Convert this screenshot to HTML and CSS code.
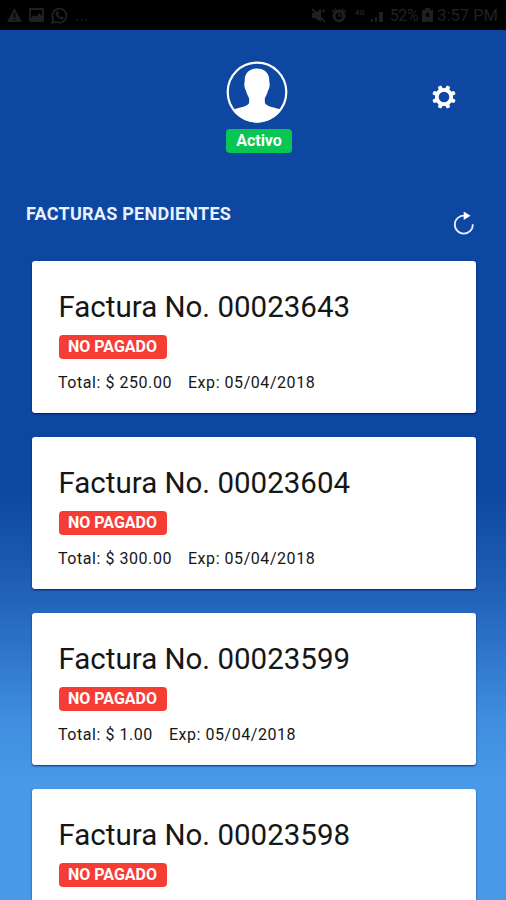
FILE: index.html
```
<!DOCTYPE html>
<html lang="es">
<head>
    <meta charset="UTF-8">
    <meta name="viewport" content="width=device-width, initial-scale=1.0">
    <title>Facturas pendientes</title>
    <link rel="stylesheet" href="styles.css">
</head>
<body>
    <div class="status-bar">
        <div class="status-left">
            <svg width="15" height="14" viewBox="0 0 15 14"><path d="M7.500 0L15 14H0zM6.700 5v4.500h1.600V5zM6.700 10.700v1.600h1.600v-1.600z" fill="currentColor" fill-rule="evenodd"/></svg>
            <svg width="15" height="14" viewBox="0 0 15 14"><path d="M0 0h15v14H0zM1.800 2v8l3.200-3 2 2 3-4 3 3V2z" fill="currentColor" fill-rule="evenodd"/></svg>
            <svg width="17" height="17" viewBox="0 0 17 17"><path d="M1 16l1.200-4A7 7 0 1 1 5 14.800z" fill="none" stroke="currentColor" stroke-width="1.800"/><path d="M5.500 4.500l1.500 0 1 2.300-1 1c.7 1.300 1.500 2 2.700 2.500l1-1.100 2 1c0 1.600-1 2.300-2.200 2.300C7.500 12 4.500 9 4.500 6.200z" fill="currentColor"/></svg>
            <span class="dots">...</span>
        </div>
        <div class="status-right">
            <svg width="15" height="15" viewBox="0 0 15 15"><path d="M1 5h3l6-4v13L4 10H1z" fill="currentColor"/><path d="M1 1l13 13M11 4l3-2" stroke="currentColor" stroke-width="1.800"/></svg>
            <svg class="alarm" width="16" height="15" viewBox="0 0 16 15"><circle cx="8" cy="8" r="5" fill="none" stroke="currentColor" stroke-width="3"/><path d="M1 4l4-3M15 4l-4-3M8 5v3h3" fill="none" stroke="currentColor" stroke-width="1.500"/></svg>
            <span class="network">4G</span>
            <svg class="signal" width="14" height="14" viewBox="0 0 14 14"><path d="M1 14v-3h2v3zM5 14V9h2v5zM9 14V4h4v10z" fill="currentColor"/></svg>
            <span class="battery-level">52%</span>
            <svg class="battery" width="11" height="14" viewBox="0 0 11 14"><path d="M3 0h5v2h3v12H0V2h3zM4 5v4h3V5z" fill="currentColor" fill-rule="evenodd"/></svg>
            <span class="clock">3:57 PM</span>
        </div>
    </div>
    <div class="header">
        <div class="profile">
            <svg class="avatar" width="62" height="62" viewBox="0 0 62 62">
                <circle cx="31" cy="31" r="29.300" fill="none" stroke="#fff" stroke-width="2.200"/>
                <path d="M31 7.500C38 7.500 43.500 12 43.300 19.500C43.300 21.500 44 22.500 43.500 25.500C43.200 28 42.300 28.500 41.800 30.500C41 33.500 39.500 35.500 38.800 37.500L38.900 42C40.500 46 49 46 55.500 49A30 30 0 0 1 6.500 49C13 46 21.500 46 23.100 42L23.200 37.500C22.500 35.500 21 33.500 20.200 30.500C19.700 28.500 18.800 28 18.500 25.500C18 22.500 18.700 21.500 18.700 19.500C18.500 12 24 7.500 31 7.500Z" fill="#fff"/>
            </svg>
            <span class="badge active">Activo</span>
        </div>
        <svg class="settings" width="24" height="24" viewBox="0 0 24 24">
            <circle cx="12" cy="12" r="7.200" fill="none" stroke="#fff" stroke-width="3.800"/>
            <g fill="#fff">
                <path id="tooth" d="M9.700 4L10.300 0.200H13.700L14.300 4z" transform="rotate(22.500 12 12)"/>
                <use href="#tooth" transform="rotate(45 12 12)"/>
                <use href="#tooth" transform="rotate(90 12 12)"/>
                <use href="#tooth" transform="rotate(135 12 12)"/>
                <use href="#tooth" transform="rotate(180 12 12)"/>
                <use href="#tooth" transform="rotate(225 12 12)"/>
                <use href="#tooth" transform="rotate(270 12 12)"/>
                <use href="#tooth" transform="rotate(315 12 12)"/>
            </g>
        </svg>
    </div>
    <div class="subtitle-line">
        <h2>FACTURAS PENDIENTES</h2>
        <svg class="refresh" width="22" height="24" viewBox="0 0 22 24">
            <path d="M19.800 13.200A9 9 0 1 1 12 4.700" fill="none" stroke="#e3f0ff" stroke-width="1.800"/>
            <path d="M10.700 0.500L17.500 4.700L10.700 9z" fill="#fff"/>
        </svg>
    </div>
    <div class="invoices">
        <div class="card">
            <h1>Factura No. 00023643</h1>
            <span class="badge unpaid">NO PAGADO</span>
            <p><span>Total: $ 250.00</span><span>Exp: 05/04/2018</span></p>
        </div>
        <div class="card">
            <h1>Factura No. 00023604</h1>
            <span class="badge unpaid">NO PAGADO</span>
            <p><span>Total: $ 300.00</span><span>Exp: 05/04/2018</span></p>
        </div>
        <div class="card">
            <h1>Factura No. 00023599</h1>
            <span class="badge unpaid">NO PAGADO</span>
            <p><span>Total: $ 1.00</span><span>Exp: 05/04/2018</span></p>
        </div>
        <div class="card">
            <h1>Factura No. 00023598</h1>
            <span class="badge unpaid">NO PAGADO</span>
        </div>
    </div>
</body>
</html>
```
FILE: styles.css
```
* {
    margin: 0;
    padding: 0;
    box-sizing: border-box;
}

body {
    font-family: Roboto, sans-serif;
    height: 900px;
    overflow: hidden;
    background: linear-gradient(#0d47a1 490px, #1d5cb3 575px, #2c71c8 640px, #3f8edf 720px, #4899e8 780px, #4899e8 900px);
}

svg {
    display: block;
    flex: none;
}

.status-bar {
    display: flex;
    justify-content: space-between;
    height: 30px;
    padding: 0 8px 0 7px;
    background-color: #000;
    color: #202020;
}

.status-left, .status-right {
    display: flex;
    align-items: center;
}

.status-left {
    gap: 7px;
}

.dots {
    font-size: 16px;
    letter-spacing: 0.3px;
}

.alarm {
    margin-left: 5px;
}

.network {
    margin: -5px 0 0 8px;
    font-size: 8px;
    font-weight: bold;
}

.signal {
    margin-left: 5px;
}

.battery-level {
    margin-left: 6px;
    font-size: 16px;
    letter-spacing: -0.4px;
}

.battery {
    margin-left: 4px;
}

.clock {
    margin-left: 4px;
    font-size: 16.5px;
}

.header {
    display: grid;
    grid-template-columns: 1fr 66px 1fr;
    height: 150px;
    padding: 31px 50px 0 62px;
}

.profile {
    grid-column: 2;
    display: flex;
    flex-direction: column;
    align-items: center;
}

.avatar {
    margin-right: 5px;
}

.settings {
    justify-self: end;
    margin-top: 24px;
}

.badge {
    display: block;
    height: 24px;
    border-radius: 4px;
    color: #fff;
    font-weight: bold;
    line-height: 23px;
    text-align: center;
}

.active {
    width: 66px;
    margin-top: 6px;
    background-color: #09c653;
    font-size: 16px;
}

.unpaid {
    width: 108px;
    margin-left: 0.5px;
    background-color: #f53d33;
    font-size: 16px;
}

.subtitle-line {
    display: flex;
    justify-content: space-between;
    height: 81px;
    padding: 22px 31px 0 26px;
}

.subtitle-line h2 {
    color: #e8f1ff;
    font-size: 18px;
    letter-spacing: 0.26px;
    line-height: 23px;
}

.refresh {
    margin-top: 9px;
}

.invoices {
    display: flex;
    flex-direction: column;
    gap: 24px;
    padding: 0 30px 0 32px;
}

.card {
    flex: none;
    height: 152px;
    padding: 28px 26px 0;
    border-radius: 3px;
    background-color: #fff;
    box-shadow: 0 1px 2px rgba(0, 0, 70, 0.7);
    color: #161616;
}

.card h1 {
    height: 46px;
    margin-left: 0.5px;
    font-size: 29.5px;
    font-weight: normal;
    line-height: 36px;
    white-space: nowrap;
}

.card p {
    display: flex;
    gap: 16px;
    margin-top: 14px;
    font-size: 16px;
    letter-spacing: 0.55px;
    line-height: 20px;
}
```
